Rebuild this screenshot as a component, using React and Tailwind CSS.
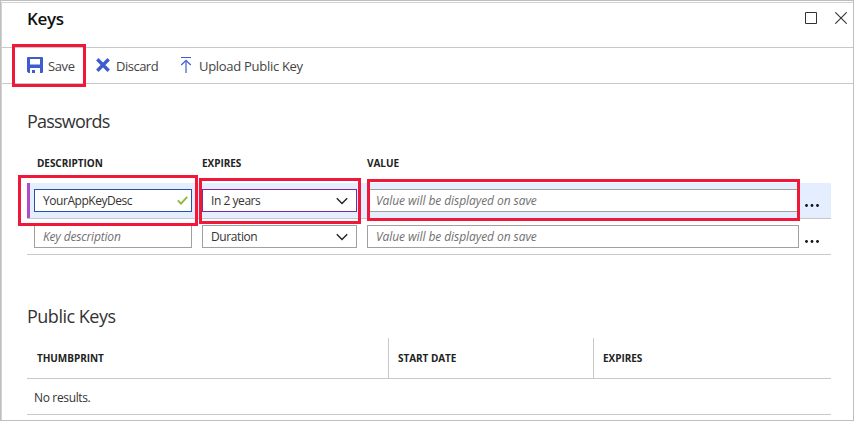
import React from "react";

const line = "border-[#c8c8c8]";

function Dots() {
  return (
    <svg className="block" width="16" height="4" viewBox="0 0 16 4" fill="#111">
      <circle cx="2.5" cy="1.5" r="1.4" />
      <circle cx="8" cy="1.5" r="1.4" />
      <circle cx="13.5" cy="1.5" r="1.4" />
    </svg>
  );
}

function Chevron() {
  return (
    <svg className="block" width="12" height="8" viewBox="0 0 12 8" fill="none" stroke="#222" strokeWidth="1.4">
      <path d="M0.8 1.2 L6 6.4 L11.2 1.2" />
    </svg>
  );
}

function Highlight({ className }) {
  return <div className={`pointer-events-none absolute z-10 border-3 border-[#f01838] ${className}`} />;
}

function PasswordRow({ active, description, duration }) {
  return (
    <div className={`flex h-9 border-b pt-1.5 ${line} ${active ? "bg-[#e5eefe]" : ""}`}>
      <div className={`w-[3px] shrink-0 ${active ? "-mt-1.5 h-[35px] bg-[#ac4fc6]" : ""}`} />
      <div
        className={`relative ml-1 flex h-[23px] w-[158px] shrink-0 items-center border bg-white pl-2 text-xs ${
          active ? "border-[#2b50a8] text-[#333]" : "border-[#a0a0a0] text-[#707070] italic"
        }`}
      >
        <span className={active ? "pt-px tracking-[-0.45px]" : "pt-px tracking-[-0.17px]"}>{description}</span>
        {active && (
          <svg className="mr-[3px] ml-auto" width="11" height="9" viewBox="0 0 11 9" fill="none" stroke="#8ab93c" strokeWidth="1.9">
            <path d="M0.8 4.4 L4 7.6 L10.2 0.8" />
          </svg>
        )}
        {active && <Highlight className="-top-[15px] -left-[17px] h-[51px] w-[180px]" />}
      </div>
      <div
        className={`relative ml-2.5 flex h-[23px] w-[155px] shrink-0 items-center justify-between border bg-white pr-2 pl-2 text-xs text-[#333] ${
          active ? "border-[#7c2a9c]" : "border-[#a0a0a0]"
        }`}
      >
        <span className={active ? "pt-px tracking-[-0.45px]" : "pt-px tracking-[-0.4px]"}>{duration}</span>
        <Chevron />
        {active && <Highlight className="-top-3 -left-1 h-[46px] w-[162px]" />}
      </div>
      <div className="relative ml-2.5 flex h-[23px] w-[432px] shrink-0 items-center border border-[#a0a0a0] bg-white pl-2 text-xs text-[#707070] italic">
        <span className="pt-px tracking-[-0.07px]">Value will be displayed on save</span>
        {active && <Highlight className="-top-[11px] -left-px h-[42px] w-[433px]" />}
      </div>
      <div className="ml-[5px] w-4 shrink-0 pt-[15px]">
        <Dots />
      </div>
    </div>
  );
}

export default function App() {
  return (
    <div className="h-[421px] w-[854px] overflow-hidden border border-[#bebebe] bg-white pt-px font-['Open_Sans','Noto_Sans',sans-serif] text-[#333]">
      <div className="h-full border-t border-l border-[#d4d4d4]">
        <header className={`flex h-[45px] justify-between border-b pl-[25px] ${line}`}>
          <h1 className="pt-[4px] text-[17px] leading-6 font-semibold tracking-[-0.3px] text-[#111]">Keys</h1>
          <div className="flex gap-[18px] pt-[9px] pr-[6px]">
            <svg width="12" height="12" viewBox="0 0 12 12" fill="none" stroke="#333">
              <path d="M0.5 0.5 H11.5 V11.5 H0.5 Z" />
            </svg>
            <svg width="12" height="12" viewBox="0 0 12 12" fill="none" stroke="#333" strokeWidth="1.1">
              <path d="M0.3 0.3 L11.7 11.7 M11.7 0.3 L0.3 11.7" />
            </svg>
          </div>
        </header>

        <div className={`relative flex h-9 items-center border-b pl-[25px] text-[13px] text-[#444] ${line}`}>
          <svg className="-mt-px shrink-0" width="16" height="16" viewBox="0 0 16 16" fill="#3c5ccf">
            <path
              fillRule="evenodd"
              d="M1 0 H15 Q16 0 16 1 V15 Q16 16 15 16 H13 V11 H3 V16 H1.5 L0 14.5 V1 Q0 0 1 0 Z M3 2 V7.5 H13 V2 Z"
            />
            <path d="M5 13 H8 V16 H5 Z" />
          </svg>
          <span className="ml-[5px] w-[26px] pt-0.5 whitespace-nowrap tracking-[-0.4px]">Save</span>
          <svg className="-mt-px ml-[22px] shrink-0" width="14" height="14" viewBox="0 0 14 14" stroke="#3c5ccf" strokeWidth="3.4">
            <path d="M1.3 1.3 L12.7 12.7 M12.7 1.3 L1.3 12.7" />
          </svg>
          <span className="ml-1.5 w-[43px] pt-0.5 whitespace-nowrap tracking-[-0.5px]">Discard</span>
          <svg className="-mt-px ml-[21px] shrink-0" width="12" height="16" viewBox="0 0 12 16" fill="none">
            <path d="M1 0.5 H11" stroke="#3c5ccf" />
            <path d="M6 4 V16" stroke="#8a9ce8" strokeWidth="2" />
            <path d="M1.2 8 L6 3.4 L10.8 8" stroke="#4a67d6" strokeWidth="1.4" />
          </svg>
          <span className="ml-[7px] pt-0.5 whitespace-nowrap tracking-[-0.29px]">Upload Public Key</span>
          <Highlight className="-top-1 left-[10px] h-[43px] w-[74px]" />
        </div>

        <main className="pr-[22px] pl-[25px]">
          <h2 className="pt-[25px] text-[18px] leading-6 tracking-[-0.8px] text-[#333]">Passwords</h2>
          <div className="flex h-[50px] pt-[22px] pl-[10px] text-[10px] leading-4 font-bold tracking-[-0.05px] text-[#222]">
            <div className="w-[165px]">DESCRIPTION</div>
            <div className="w-[165px]">EXPIRES</div>
            <div>VALUE</div>
          </div>
          <PasswordRow active description="YourAppKeyDesc" duration="In 2 years" />
          <PasswordRow description="Key description" duration="Duration" />

          <h2 className="pt-[49px] text-[18px] leading-6 tracking-[-0.5px] text-[#333]">Public Keys</h2>
          <div className={`mt-[10px] flex h-[41px] border-b text-[10px] leading-[40px] font-bold tracking-[-0.05px] text-[#222] ${line}`}>
            <div className="w-[361px] pl-[10px]">THUMBPRINT</div>
            <div className={`w-[205px] border-l pl-[9px] ${line}`}>START DATE</div>
            <div className={`border-l pl-[9px] ${line}`}>EXPIRES</div>
          </div>
          <div className={`h-9 border-b pl-[7px] text-xs leading-[37px] tracking-[-0.35px] ${line}`}>No results.</div>
        </main>
      </div>
    </div>
  );
}
